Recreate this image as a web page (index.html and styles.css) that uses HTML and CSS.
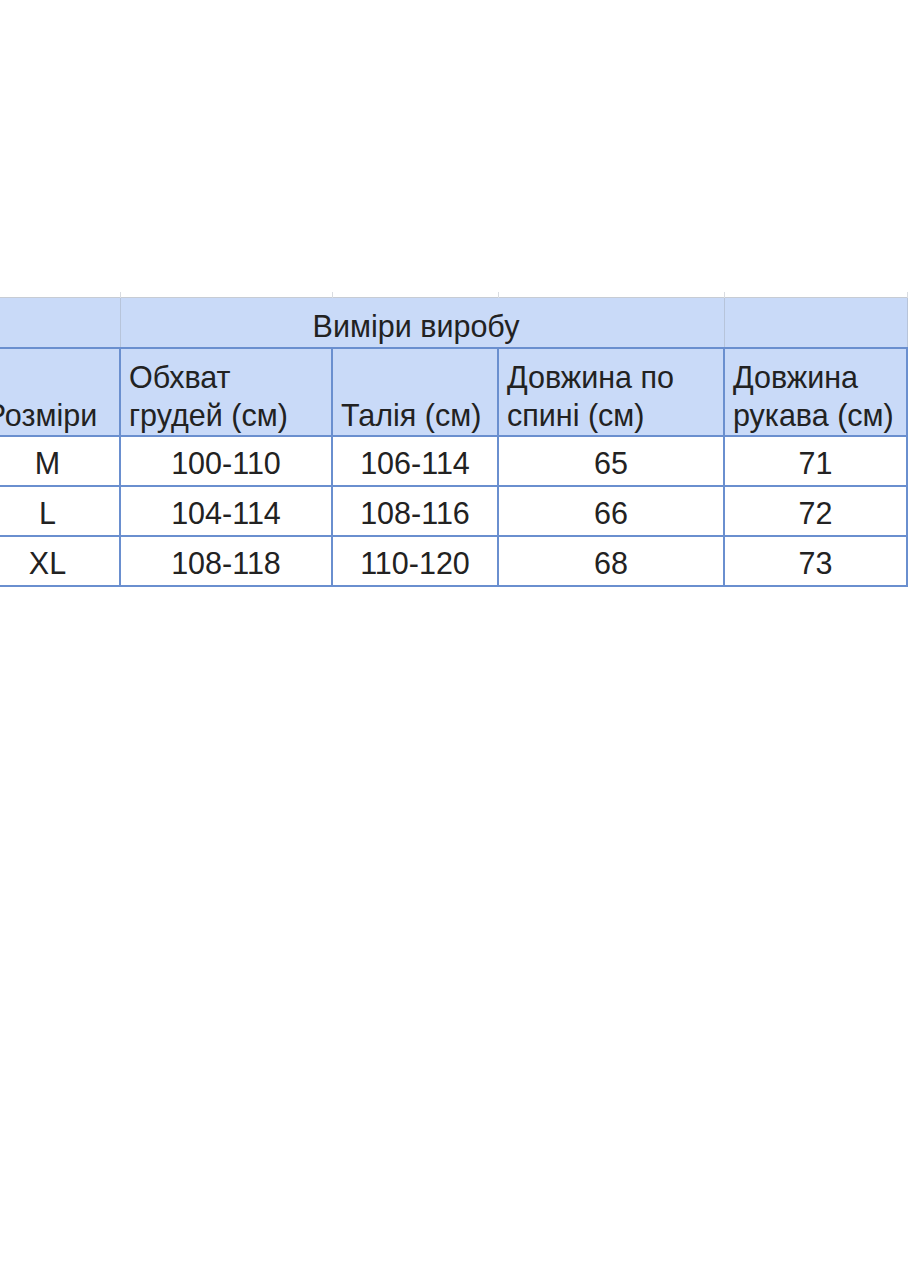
FILE: index.html
```html
<!DOCTYPE html>
<html lang="uk">
<head>
<meta charset="utf-8">
<title>Таблиця розмірів</title>
<link rel="stylesheet" href="styles.css">
</head>
<body>
<div class="page">
  <table class="sizes">
    <colgroup>
      <col class="c1"><col class="c2"><col class="c3"><col class="c4"><col class="c5">
    </colgroup>
    <tbody>
      <tr class="stub"><td></td><td></td><td></td><td></td><td></td></tr>
      <tr class="group">
        <td></td>
        <td colspan="3" class="title">Виміри виробу</td>
        <td></td>
      </tr>
      <tr class="head">
        <td class="first">Розміри</td>
        <td>Обхват<br>грудей (см)</td>
        <td>Талія (см)</td>
        <td>Довжина по<br>спині (см)</td>
        <td>Довжина<br>рукава (см)</td>
      </tr>
      <tr class="row"><td>M</td><td>100-110</td><td>106-114</td><td>65</td><td>71</td></tr>
      <tr class="row"><td>L</td><td>104-114</td><td>108-116</td><td>66</td><td>72</td></tr>
      <tr class="row"><td>XL</td><td>108-118</td><td>110-120</td><td>68</td><td>73</td></tr>
    </tbody>
  </table>
</div>
</body>
</html>
```

FILE: styles.css
```css
html, body {
  margin: 0;
  padding: 0;
  background: #ffffff;
}

.page {
  padding-top: 292px;
  overflow: hidden;
  width: 920px;
  height: 1280px;
  box-sizing: border-box;
}

.sizes {
  margin-left: -26px;
  border-collapse: collapse;
  table-layout: fixed;
  width: 932px;
  font-family: "Liberation Sans", Arial, sans-serif;
  font-size: 30.5px;
  color: #222222;
}

.c1 { width: 145px; }
.c2 { width: 212px; }
.c3 { width: 166px; }
.c4 { width: 226px; }
.c5 { width: 183px; }

.sizes td {
  padding: 0;
  white-space: nowrap;
}

.stub td {
  height: 5px;
  border-right: 1px solid #d9dce1;
}

.group td {
  height: 47px;
  background: #c9daf8;
  border-top: 1px solid #c7ccd4;
  border-right: 1px solid #b7c4da;
  border-bottom: 2px solid #6a8fcf;
  vertical-align: bottom;
  line-height: 38px;
}

.group .title {
  text-align: center;
  padding: 0 12px 2px 0;
}

.head td {
  height: 85px;
  background: #c9daf8;
  border: 2px solid #6a8fcf;
  vertical-align: bottom;
  text-align: left;
  line-height: 38px;
  padding: 0 4px 1px 8px;
}

.head td.first {
  text-align: center;
  padding: 0 12px 1px 0;
}

.row td {
  height: 45px;
  border: 2px solid #6a8fcf;
  text-align: center;
  vertical-align: bottom;
  line-height: 38px;
  padding: 0 0 3px 0;
  background: #ffffff;
}
```
